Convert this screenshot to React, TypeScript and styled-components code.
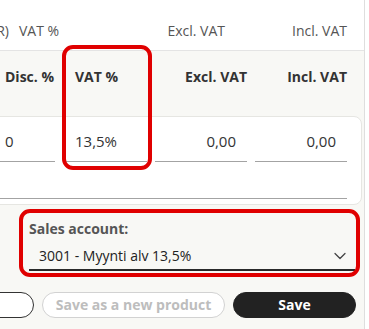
import * as React from "react";
import styled, { createGlobalStyle } from "styled-components";
import { ChevronDown } from "lucide-react";

const GlobalStyle = createGlobalStyle`
  html, body {
    margin: 0;
    padding: 0;
    background: #ffffff;
    font-family: "Open Sans", "Liberation Sans", sans-serif;
  }
`;

// the screenshot is scrolled: everything left of x=0 is cut away
const Viewport = styled.div`
  width: 364px;
  height: 329px;
  overflow: hidden;
  border-right: 1px solid #dedede;
`;

const Sheet = styled.div`
  position: relative;
  width: 484px;
  margin-left: -120px;
  min-height: 329px;
  background: #f8f8f5;
`;

const TableHeader = styled.div`
  display: grid;
  grid-template-columns: 129px 106px 110px 122px;
  height: 51px;
  box-sizing: border-box;
  padding: 22px 17px 0 0;
  background: #ffffff;
  border-bottom: 1px solid #e4e4e4;
  font-size: 14px;
  line-height: 18px;
  color: #555555;
`;

const HeadCell = styled.div<{ $align?: "left" | "right"; $pad?: number }>`
  text-align: ${(p) => p.$align ?? "left"};
  padding-left: ${(p) => p.$pad ?? 0}px;
  white-space: nowrap;
`;

const FormHead = styled.div`
  display: grid;
  grid-template-columns: 62px 84px 92px 92px;
  column-gap: 8px;
  padding: 17px 17px 30px 113px;
  font-size: 14px;
  line-height: 18px;
  font-weight: 700;
  color: #333333;
`;

const ColTitle = styled.div<{ $align?: "left" | "right" }>`
  text-align: ${(p) => p.$align ?? "left"};
  padding-left: ${(p) => (p.$align === "right" ? 0 : 12)}px;
  white-space: nowrap;
`;

const Card = styled.div`
  margin: 0 2px 0 20px;
  background: #ffffff;
  border: 1px solid #e6e6e2;
  border-radius: 8px;
  padding: 0 14px 5px 92px;
`;

const FieldGrid = styled.div`
  display: grid;
  grid-template-columns: 62px 84px 92px 92px;
  column-gap: 8px;
`;

const Field = styled.div<{ $align?: "left" | "right"; $wide?: boolean }>`
  grid-column: ${(p) => (p.$wide ? "1 / -1" : "auto")};
  height: 20px;
  padding: 14px 11px 10px 12px;
  text-align: ${(p) => p.$align ?? "left"};
  font-size: 15px;
  line-height: 20px;
  color: #333333;
  border-bottom: 1px solid #a3a3a3;

  ${(p) => p.$wide && "height: 36px; padding: 0; margin-left: -100px;"}
`;

const SalesRow = styled.div`
  display: flex;
  justify-content: flex-end;
  padding: 15px 9px 0 0;
`;

const SalesField = styled.div`
  width: 326px;
`;

const Label = styled.div`
  font-size: 14px;
  line-height: 18px;
  font-weight: 700;
  color: #555555;
  margin-bottom: 8px;
`;

const Select = styled.div`
  display: flex;
  align-items: center;
  justify-content: space-between;
  padding: 0 5px 3px 10px;
  font-size: 14px;
  line-height: 18px;
  color: #222222;
  border-bottom: 2px solid #2a2a2a;

  svg {
    color: #444444;
  }
`;

const Actions = styled.div`
  display: flex;
  justify-content: flex-end;
  gap: 8px;
  padding: 21px 8px 0 0;
`;

const Button = styled.button<{ $variant: "outline" | "disabled" | "primary"; $w: number }>`
  flex-shrink: 0;
  width: ${(p) => p.$w}px;
  height: 26px;
  border-radius: 13px;
  font-family: inherit;
  font-size: 14px;
  font-weight: 700;
  line-height: 18px;
  padding: 0;
  cursor: pointer;
  background: ${(p) => (p.$variant === "primary" ? "#222222" : "#ffffff")};
  color: ${(p) =>
    p.$variant === "primary" ? "#ffffff" : p.$variant === "disabled" ? "#bdbdbd" : "#333333"};
  border: 1px solid
    ${(p) =>
      p.$variant === "primary" ? "#222222" : p.$variant === "disabled" ? "#d2d2d2" : "#333333"};
`;

const Highlight = styled.div<{ $x: number; $y: number; $w: number; $h: number }>`
  position: absolute;
  left: ${(p) => p.$x}px;
  top: ${(p) => p.$y}px;
  width: ${(p) => p.$w}px;
  height: ${(p) => p.$h}px;
  box-sizing: border-box;
  border: 4px solid #e00000;
  border-radius: 11px;
  pointer-events: none;
`;

const App: React.FunctionComponent = () => {
  return (
    <Viewport>
      <GlobalStyle />
      <Sheet>
        <TableHeader>
          <HeadCell $align="right">Price (EUR)</HeadCell>
          <HeadCell $pad={10}>VAT %</HeadCell>
          <HeadCell $align="right">Excl. VAT</HeadCell>
          <HeadCell $align="right">Incl. VAT</HeadCell>
        </TableHeader>

        <FormHead>
          <ColTitle>Disc. %</ColTitle>
          <ColTitle>VAT %</ColTitle>
          <ColTitle $align="right">Excl. VAT</ColTitle>
          <ColTitle $align="right">Incl. VAT</ColTitle>
        </FormHead>

        <Card>
          <FieldGrid>
            <Field>0</Field>
            <Field>13,5%</Field>
            <Field $align="right">0,00</Field>
            <Field $align="right">0,00</Field>
            <Field $wide />
          </FieldGrid>
        </Card>

        <SalesRow>
          <SalesField>
            <Label>Sales account:</Label>
            <Select>
              <span>3001 - Myynti alv 13,5%</span>
              <ChevronDown size={20} strokeWidth={1.5} />
            </Select>
          </SalesField>
        </SalesRow>

        <Actions>
          <Button $variant="outline" $w={130}>
            Cancel
          </Button>
          <Button $variant="disabled" $w={183}>
            Save as a new product
          </Button>
          <Button $variant="primary" $w={123}>
            Save
          </Button>
        </Actions>

        <Highlight $x={182} $y={45} $w={90} $h={125} />
        <Highlight $x={139} $y={209} $w={341} $h={68} />
      </Sheet>
    </Viewport>
  );
};

export default App;
